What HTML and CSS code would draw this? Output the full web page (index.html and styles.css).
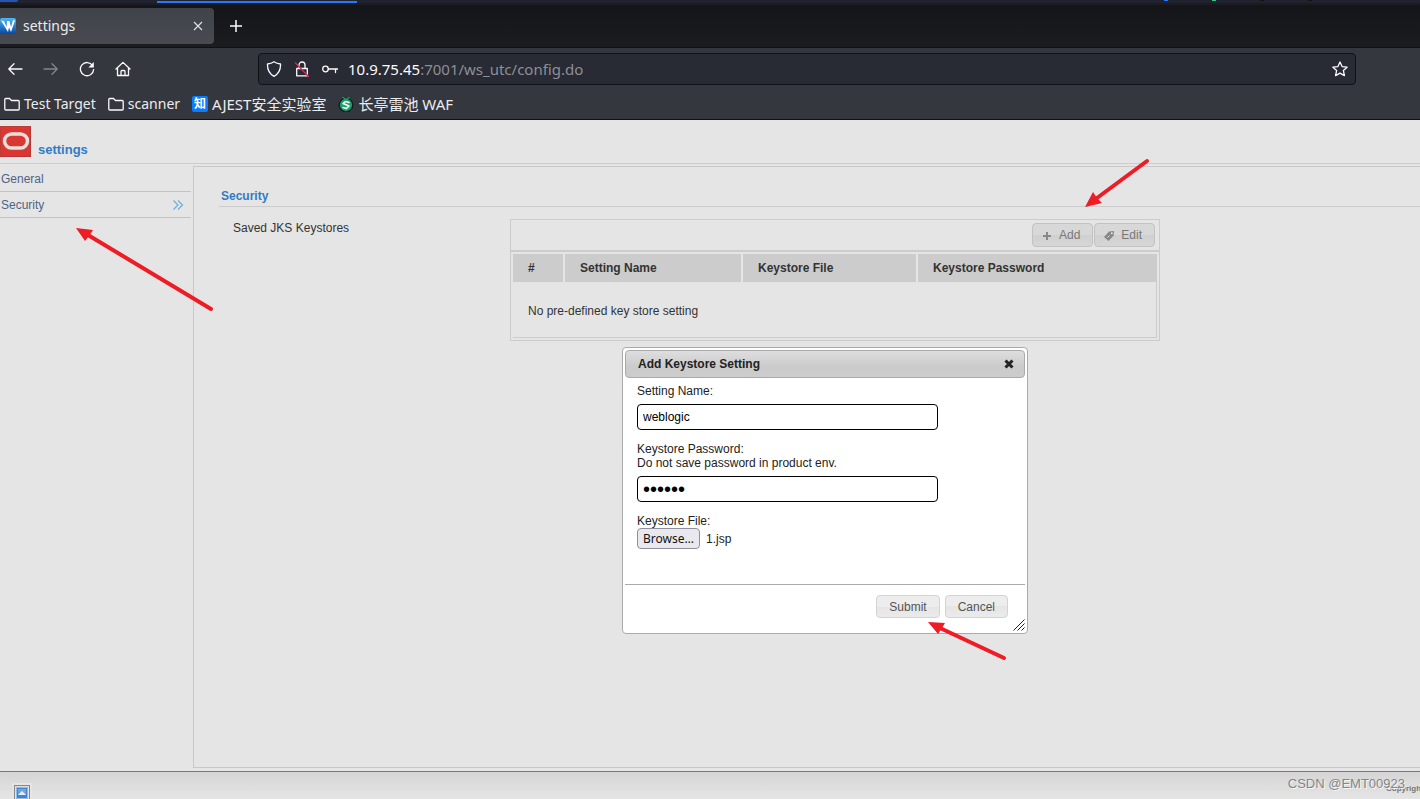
FILE: index.html
```html
<!DOCTYPE html>
<html lang="en">

<head>
    <meta charset="UTF-8">
    <title>settings</title>
    <link rel="stylesheet" href="styles.css">
</head>

<body>

    <!-- Browser window -->
    <header class="browser">
        <div class="desktop-strip">
            <span class="strip-launcher"></span>
            <span class="strip-task"></span>
            <span class="strip-tray"><i class="dot-blue"></i><i class="dot-green"></i><i></i><i></i></span>
        </div>
        <div class="tab-bar">
            <div class="tab">
                <svg class="favicon" viewBox="0 0 16 16">
                    <defs>
                        <linearGradient id="favBlue" x1="0" y1="0" x2="0" y2="1">
                            <stop offset="0" stop-color="#4db8f5" />
                            <stop offset="1" stop-color="#0648a8" />
                        </linearGradient>
                    </defs>
                    <rect width="16" height="16" rx="2" fill="url(#favBlue)" />
                    <path d="M1 2.500l3 .5 2.500 6L7 3h2.500l1.500 6 2-7 2 .5L11 14 9 9.500 8 14z" fill="#fff" />
                </svg>
                <span class="tab-title">settings</span>
                <button class="tab-close" aria-label="Close tab">
                    <svg width="10" height="10" viewBox="0 0 10 10"><path d="M1 1l8 8M9 1L1 9" stroke="#e4e4e6" stroke-width="1.1" /></svg>
                </button>
            </div>
            <button class="new-tab" aria-label="New tab">
                <svg width="14" height="14" viewBox="0 0 14 14"><path d="M7 1v12M1 7h12" stroke="#fbfbfe" stroke-width="1.5" /></svg>
            </button>
        </div>
        <nav class="nav-bar">
            <button aria-label="Back">
                <svg viewBox="0 0 16 16"><path d="M15 8H2M7 2.8L1.8 8 7 13.2" /></svg>
            </button>
            <button class="disabled" aria-label="Forward" disabled>
                <svg viewBox="0 0 16 16"><path d="M1 8h13M9 2.8L14.2 8 9 13.2" /></svg>
            </button>
            <button aria-label="Reload">
                <svg viewBox="0 0 16 16"><path d="M13.6 4.6A6.6 6.6 0 1 0 14.6 8.6" /><path d="M14.8 1v5.5H9.4z" fill="#fbfbfe" stroke="none" /></svg>
            </button>
            <button aria-label="Home">
                <svg viewBox="0 0 16 16"><path d="M1 8l7-6.6L15 8M2.5 7v7.5h11V7M6 14.500V10.500a1 1 0 0 1 1-1h2a1 1 0 0 1 1 1v4" /></svg>
            </button>
            <div class="url-bar">
                <svg viewBox="0 0 16 16"><path d="M8 .8c2 1.400 4.200 2 6.500 2.200C14.800 8.500 12.500 13 8 15.300 3.500 13 1.200 8.500 1.500 3 3.800 2.800 6 2.200 8 .8z" /></svg>
                <svg viewBox="0 0 16 16"><path d="M2.700 7.500h10.600v7.300H2.700zM5 7.500V4a3 3 0 0 1 6 0v3.500" /><path d="M1.500 2l13 13.500" stroke="#e22850" /></svg>
                <svg viewBox="0 0 16 16"><circle cx="3.500" cy="8" r="2.800" /><path d="M6.300 8H16M13.500 8v3.500" /></svg>
                <div class="url"><b>10.9.75.45</b>:7001/ws_utc/config.do</div>
                <svg viewBox="0 0 16 16"><path d="M8 1l2.100 4.600 5 .6-3.700 3.400 1 5L8 12.100l-4.400 2.500 1-5L.9 6.200l5-.6z" /></svg>
            </div>
        </nav>
        <div class="bookmarks">
            <a href="#"><svg viewBox="0 0 16 16"><path d="M.8 13V3.500a1 1 0 0 1 1-1h3.700l2 2h6.700a1 1 0 0 1 1 1V13a1 1 0 0 1-1 1H1.800a1 1 0 0 1-1-1z" /></svg>Test Target</a>
            <a href="#"><svg viewBox="0 0 16 16"><path d="M.8 13V3.500a1 1 0 0 1 1-1h3.700l2 2h6.700a1 1 0 0 1 1 1V13a1 1 0 0 1-1 1H1.800a1 1 0 0 1-1-1z" /></svg>scanner</a>
            <a href="#" class="cjk"><span class="zhihu">知</span>AJEST安全实验室</a>
            <a href="#" class="cjk"><svg viewBox="0 0 16 16"><circle cx="8" cy="9" r="6.800" fill="#16a06a" stroke="#1b1c20" /><path d="M5 1.500l3 2 3-2" stroke="#16a06a" /><path d="M11 6.500L7.500 5.500 5 7.500l6 2.500-2.500 2.500L5 11.500" stroke="#fff" stroke-width="1.500" /></svg>长亭雷池 WAF</a>
        </div>
    </header>

    <!-- Page -->
    <main class="page">
        <div class="page-header">
            <svg class="logo" viewBox="0 0 31 31">
                <rect width="31" height="31" fill="#d93832" />
                <path d="M0 0h31v1H1v30H0z" fill="#c03a38" />
                <path d="M30 1h1v30H1v-1h29z" fill="#b93436" />
                <rect x="4.500" y="8" width="23" height="14" rx="7" fill="none" stroke="#e6dfdc" stroke-width="3.500" />
            </svg>
            <h1>settings</h1>
        </div>

        <div class="columns">
            <nav class="sidebar">
                <a href="#">General</a>
                <a href="#">Security
                    <svg width="12" height="10" viewBox="0 0 12 10"><path d="M1.500 .5L6 5 1.500 9.500M6 .5L10.500 5 6 9.500" /></svg>
                </a>
            </nav>

            <section class="content">
                <h2>Security</h2>
                <div class="field-row">
                    <span>Saved JKS Keystores</span>
                    <div class="grid-panel">
                        <div class="grid-tools">
                            <button class="ui-button">
                                <svg viewBox="0 0 12 12"><path d="M6 2v8M2 6h8" stroke="#888" stroke-width="2" /></svg>Add
                            </button>
                            <button class="ui-button">
                                <svg viewBox="0 0 12 12"><path d="M1 7l5-5.500 5-.5-.300 4.500L5.500 11z" fill="#888" /><path d="M4.500 7.500L6.500 5.500" stroke="#ddd" /><circle cx="8.800" cy="3.200" r="1" fill="#e5e5e5" /></svg>Edit
                            </button>
                        </div>
                        <table>
                            <thead>
                                <tr>
                                    <th class="col-num">#</th>
                                    <th class="col-name">Setting Name</th>
                                    <th class="col-file">Keystore File</th>
                                    <th>Keystore Password</th>
                                </tr>
                            </thead>
                            <tbody>
                                <tr>
                                    <td colspan="4">No pre-defined key store setting</td>
                                </tr>
                            </tbody>
                        </table>
                    </div>
                </div>
            </section>
        </div>

        <footer class="page-footer">
            <span class="tray-icon">
                <svg width="12" height="12" viewBox="0 0 12 12"><rect width="12" height="12" fill="#8dbdec" /><rect x="1" y="1" width="10" height="10" fill="#3f86d2" /><rect x="2" y="2" width="8" height="6" fill="#6aa7e4" /><path d="M2 8l4-4 4 4z" fill="#f0ede8" /></svg>
            </span>
            <span class="copyright">Copyright</span>
        </footer>
    </main>

    <!-- Add keystore dialog -->
    <form class="dialog" role="dialog" aria-labelledby="dialogTitle">
        <div class="dialog-title">
            <span id="dialogTitle">Add Keystore Setting</span>
            <button type="button" aria-label="Close">
                <svg width="10" height="10" viewBox="0 0 10 10"><path d="M1.500 1.500l7 7M8.500 1.500l-7 7" stroke="#222" stroke-width="3" /></svg>
            </button>
        </div>
        <div class="dialog-body">
            <label for="settingName">Setting Name:</label>
            <input id="settingName" type="text" value="weblogic">
            <label for="password">Keystore Password:<br>Do not save password in product env.</label>
            <input id="password" type="password" value="123456">
            <label for="keystoreFile">Keystore File:</label>
            <div class="file-row">
                <button type="button" id="keystoreFile">Browse…</button>
                <span>1.jsp</span>
            </div>
        </div>
        <div class="dialog-buttons">
            <button type="button" class="ui-button">Submit</button>
            <button type="button" class="ui-button">Cancel</button>
        </div>
        <svg class="resizer" viewBox="0 0 12 12"><path d="M.5 11.500l11-11M4.500 11.500l7-7M8.500 11.500l3-3" stroke="#222" /></svg>
    </form>

    <!-- Arrows drawn over the page -->
    <svg class="arrow arrow-security" viewBox="0 0 140 86"><path d="M135 81L12 7" /><polygon points="0,0 17,2 13,8 9,13" /></svg>
    <svg class="arrow arrow-add" viewBox="0 0 66 52"><path d="M62 4L12 41" /><polygon points="0,50 8,35 12,41 17,46" /></svg>
    <svg class="arrow arrow-submit" viewBox="0 0 80 42"><path d="M76 36L12 6" /><polygon points="0,0 17,1 14,6 10,12" /></svg>

    <span class="watermark">CSDN @EMT00923</span>

</body>

</html>
```
FILE: styles.css
```css
* {
    box-sizing: border-box;
}

body {
    margin: 0;
    height: 100vh;
    display: flex;
    flex-direction: column;
    position: relative;
    overflow: hidden;
    font-family: "Liberation Sans", Arial, sans-serif;
    font-size: 12px;
    line-height: 14px;
    color: #333;
    background: #e5e5e5;
}

button {
    margin: 0;
    padding: 0;
    border: none;
    background: none;
    font: inherit;
    color: inherit;
}

a {
    color: inherit;
    text-decoration: none;
}

/* browser */
.browser {
    font-family: "Noto Sans", "Noto Sans CJK SC", sans-serif;
    font-size: 14px;
    line-height: 20px;
    color: #ececee;
    background: #35373e;
    border-bottom: 1px solid #0f1013;
}

.desktop-strip {
    display: flex;
    height: 5px;
    background: #20222f;
    border-bottom: 2px solid #1b1b20;
}

.strip-launcher {
    width: 18px;
    height: 2px;
    margin-right: 139px;
    background: #2456b8;
    border-radius: 0 0 8px 0;
}

.strip-task {
    width: 200px;
    height: 3px;
    border-top: 1px solid #20222f;
    background: #2777ff;
}

.strip-tray {
    display: flex;
    gap: 44px;
    margin-left: auto;
    margin-right: 108px;
}

.strip-tray i {
    width: 4px;
    height: 1px;
    background: #111;
}

.strip-tray .dot-blue {
    background: #2777ff;
}

.strip-tray .dot-green {
    background: #2fc77d;
}

.tab-bar {
    display: flex;
    align-items: center;
    height: 43px;
    background: linear-gradient(#141519, #1b1c20);
    border-bottom: 1px solid #101114;
}

.tab {
    display: flex;
    align-items: center;
    width: 214px;
    height: 36px;
    padding-right: 8px;
    border-radius: 0 4px 4px 0;
    background: linear-gradient(#40434a, #474a51);
}

.favicon {
    width: 16px;
    height: 16px;
    margin-right: 7px;
}

.tab-title {
    flex: 1;
}

.tab-close {
    display: flex;
    justify-content: center;
    width: 16px;
}

.new-tab {
    display: flex;
    margin-left: 15px;
}

.nav-bar {
    display: flex;
    align-items: center;
    gap: 8px;
    height: 41px;
    padding-left: 1px;
}

.nav-bar svg,
.bookmarks svg {
    width: 16px;
    height: 16px;
    fill: none;
    stroke: #fbfbfe;
    stroke-width: 1.3;
    stroke-linecap: round;
    stroke-linejoin: round;
}

.nav-bar button {
    display: flex;
    justify-content: center;
    width: 28px;
}

.nav-bar .disabled {
    opacity: 0.4;
}

.url-bar {
    flex: 1;
    display: flex;
    align-items: center;
    gap: 12px;
    height: 32px;
    margin-left: 113px;
    margin-right: 64px;
    padding: 0 7px;
    border: 1px solid #111217;
    border-radius: 4px;
    background: #282a34;
}

.url {
    flex: 1;
    margin-left: -2px;
    font-size: 15px;
    color: #8e8f96;
}

.url b {
    font-weight: normal;
    color: #fbfbfe;
}

.bookmarks {
    display: flex;
    align-items: center;
    gap: 12px;
    height: 30px;
    padding-left: 4px;
}

.bookmarks a {
    display: flex;
    align-items: center;
    gap: 4px;
    white-space: nowrap;
}

.bookmarks .cjk {
    font-size: 15px;
}

.zhihu {
    width: 16px;
    height: 16px;
    border-radius: 2px;
    background: #0b7bff;
    color: #fff;
    font-size: 12px;
    font-weight: bold;
    line-height: 16px;
    text-align: center;
}

/* page */
.page {
    flex: 1;
    display: flex;
    flex-direction: column;
    min-height: 0;
}

.page-header {
    display: flex;
    align-items: flex-end;
    gap: 7px;
    height: 44px;
    padding-bottom: 6px;
    border-bottom: 1px solid #ccc;
}

.logo {
    width: 31px;
    height: 31px;
}

h1,
h2 {
    margin: 0;
    color: #327bc4;
}

h1 {
    font-size: 13px;
    line-height: 14px;
}

h2 {
    padding: 0 2px 3px;
    border-bottom: 1px solid #ccc;
    font-size: 12px;
    line-height: 14px;
}

.columns {
    flex: 1;
    display: flex;
    gap: 2px;
    padding-bottom: 3px;
}

.sidebar {
    width: 191px;
    padding-top: 2px;
    color: #4f6387;
}

.sidebar a {
    display: flex;
    justify-content: space-between;
    align-items: center;
    height: 26px;
    padding: 0 7px 0 1px;
    border-bottom: 1px solid #c3c3c3;
}

.sidebar svg {
    fill: none;
    stroke: #6aaed8;
    stroke-width: 1.2;
}

.content {
    flex: 1;
    margin-top: 2px;
    padding: 22px 0 0 25px;
    border: 1px solid #c8c8c8;
    border-right: none;
}

.field-row {
    display: grid;
    grid-template-columns: 277px 650px;
    padding: 12px 0 0 14px;
}

.field-row > span {
    padding-top: 2px;
}

.grid-panel {
    border: 1px solid #ccc;
    padding-bottom: 2px;
}

.grid-tools {
    display: flex;
    justify-content: flex-end;
    gap: 1px;
    padding: 3px 4px;
    border-bottom: 2px solid #ccc;
}

.ui-button {
    display: flex;
    align-items: center;
    justify-content: center;
    height: 23px;
    padding: 0 12px;
    border: 1px solid #d3d3d3;
    border-radius: 4px;
    background: linear-gradient(#ededed 50%, #e5e5e5 50%, #ebebeb);
    color: #555;
}

.grid-tools .ui-button {
    gap: 6px;
    height: 24px;
    padding: 0 12px 0 8px;
    border-color: #c2c2c2;
    background: linear-gradient(#d8d8d8 50%, #d0d0d0 50%, #d6d6d6);
    color: #777;
}

.grid-tools svg {
    width: 12px;
    height: 12px;
    margin-top: 2px;
    fill: none;
}

table {
    width: 100%;
    table-layout: fixed;
    border-collapse: separate;
    border-spacing: 2px 0;
    padding-top: 2px;
}

th {
    height: 28px;
    padding: 0 15px;
    background: #ccc;
    text-align: left;
}

.col-num {
    width: 50px;
}

.col-name {
    width: 176px;
}

.col-file {
    width: 173px;
}

td {
    height: 56px;
    padding: 2px 15px 0;
    border-right: 1px solid #ccc;
    border-bottom: 1px solid #ccc;
}

.page-footer {
    display: flex;
    align-items: flex-start;
    justify-content: space-between;
    height: 28px;
    padding-left: 14px;
    overflow: hidden;
    border-top: 1px solid #777;
    background: linear-gradient(#d5d5d5, #e5e5e5);
}

.tray-icon {
    margin-top: 13px;
    padding: 1px;
    border: 1px solid #888;
    outline: 2px solid #e5e5e5;
}

.tray-icon svg {
    display: block;
}

.copyright {
    width: 34px;
    margin-top: 10px;
    font-size: 8px;
    font-weight: bold;
    color: #777;
}

/* dialog */
.dialog {
    position: absolute;
    top: 347px;
    left: 622px;
    width: 406px;
    padding: 2px;
    border: 1px solid #aaa;
    border-radius: 4px;
    background: #fff;
    color: #222;
}

.dialog-title {
    display: flex;
    align-items: center;
    justify-content: space-between;
    height: 28px;
    padding: 0 10px 0 12px;
    border: 1px solid #aaa;
    border-radius: 4px;
    background: linear-gradient(#dedede, #cbcbcb 60%, #cccccc);
    font-weight: bold;
}

.dialog-title button,
.dialog-title svg {
    display: block;
}

.dialog-body {
    height: 206px;
    padding: 6px 12px;
}

.dialog-body label {
    display: block;
}

.dialog-body input {
    display: block;
    width: 301px;
    height: 26px;
    margin: 6px 0 12px;
    padding: 0 5px;
    border: 1px solid #000;
    border-radius: 4px;
    background: #fff;
    font: inherit;
    color: #000;
}

.dialog-body input[type="password"] {
    font-size: 20px;
}

.file-row {
    display: flex;
    align-items: center;
    gap: 6px;
}

.file-row button {
    height: 21px;
    padding: 0 5px;
    border: 1px solid #8f8f9d;
    border-radius: 4px;
    background: #e9e9ed;
    font-family: "Noto Sans", sans-serif;
    color: #111;
}

.dialog-buttons {
    display: flex;
    justify-content: flex-end;
    gap: 5px;
    padding: 10px 17px 13px;
    border-top: 1px solid #aaa;
}

.resizer {
    position: absolute;
    right: 2px;
    bottom: 2px;
    width: 12px;
    height: 12px;
    fill: none;
}

/* overlays */
.arrow {
    position: absolute;
    fill: #ee1c25;
    stroke: #ee1c25;
}

.arrow path {
    stroke-width: 4;
    stroke-linecap: round;
}

.arrow polygon {
    stroke: none;
}

.arrow-security {
    top: 228px;
    left: 76px;
    width: 140px;
    height: 86px;
}

.arrow-add {
    top: 157px;
    left: 1085px;
    width: 66px;
    height: 52px;
}

.arrow-submit {
    top: 622px;
    left: 928px;
    width: 80px;
    height: 42px;
}

.watermark {
    position: absolute;
    right: 15px;
    bottom: 8px;
    font-size: 13px;
    color: #858585;
    text-shadow: 1px 1px 0 #f5f5f5;
}
```
